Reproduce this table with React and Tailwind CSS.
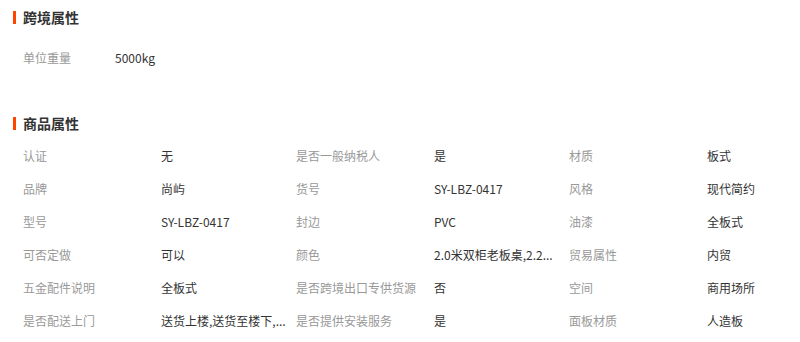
import React from "react";

const rows = [
  ["认证", "无", "是否一般纳税人", "是", "材质", "板式"],
  ["品牌", "尚屿", "货号", "SY-LBZ-0417", "风格", "现代简约"],
  ["型号", "SY-LBZ-0417", "封边", "PVC", "油漆", "全板式"],
  ["可否定做", "可以", "颜色", "2.0米双柜老板桌,2.2...", "贸易属性", "内贸"],
  ["五金配件说明", "全板式", "是否跨境出口专供货源", "否", "空间", "商用场所"],
  ["是否配送上门", "送货上楼,送货至楼下,...", "是否提供安装服务", "是", "面板材质", "人造板"],
];

const Title = ({ text }) => (
  <div className="flex items-center h-[18px] pl-[13px]">
    <span className="w-[3px] h-[13px] bg-[#ff4400]"></span>
    <span className="ml-[7px] text-[14px] font-bold text-[#333]">{text}</span>
  </div>
);

const Cell = ({ label, value }) => (
  <div className="flex items-center">
    <span className="w-[138px] shrink-0 text-[#999]">{label}</span>
    <span className="whitespace-nowrap text-[#333]">{value}</span>
  </div>
);

export default function App() {
  return (
    <div
      className="w-[800px] h-[342px] bg-white overflow-hidden pt-[8px] text-[12px]"
      style={{ fontFamily: '"Noto Sans CJK SC", "Noto Sans", sans-serif' }}
    >
      <Title text="跨境属性" />
      <div className="mt-[15px] pl-[23px] flex items-center h-[33px]">
        <span className="w-[92px] text-[#999]">单位重量</span>
        <span className="text-[#333]">5000kg</span>
      </div>

      <div className="mt-[40px]">
        <Title text="商品属性" />
      </div>
      <div className="mt-[7px] pl-[23px]">
        {rows.map((r, i) => (
          <div key={i} className="grid grid-cols-[273px_273px_1fr] h-[33px]">
            <Cell label={r[0]} value={r[1]} />
            <Cell label={r[2]} value={r[3]} />
            <Cell label={r[4]} value={r[5]} />
          </div>
        ))}
      </div>
    </div>
  );
}
